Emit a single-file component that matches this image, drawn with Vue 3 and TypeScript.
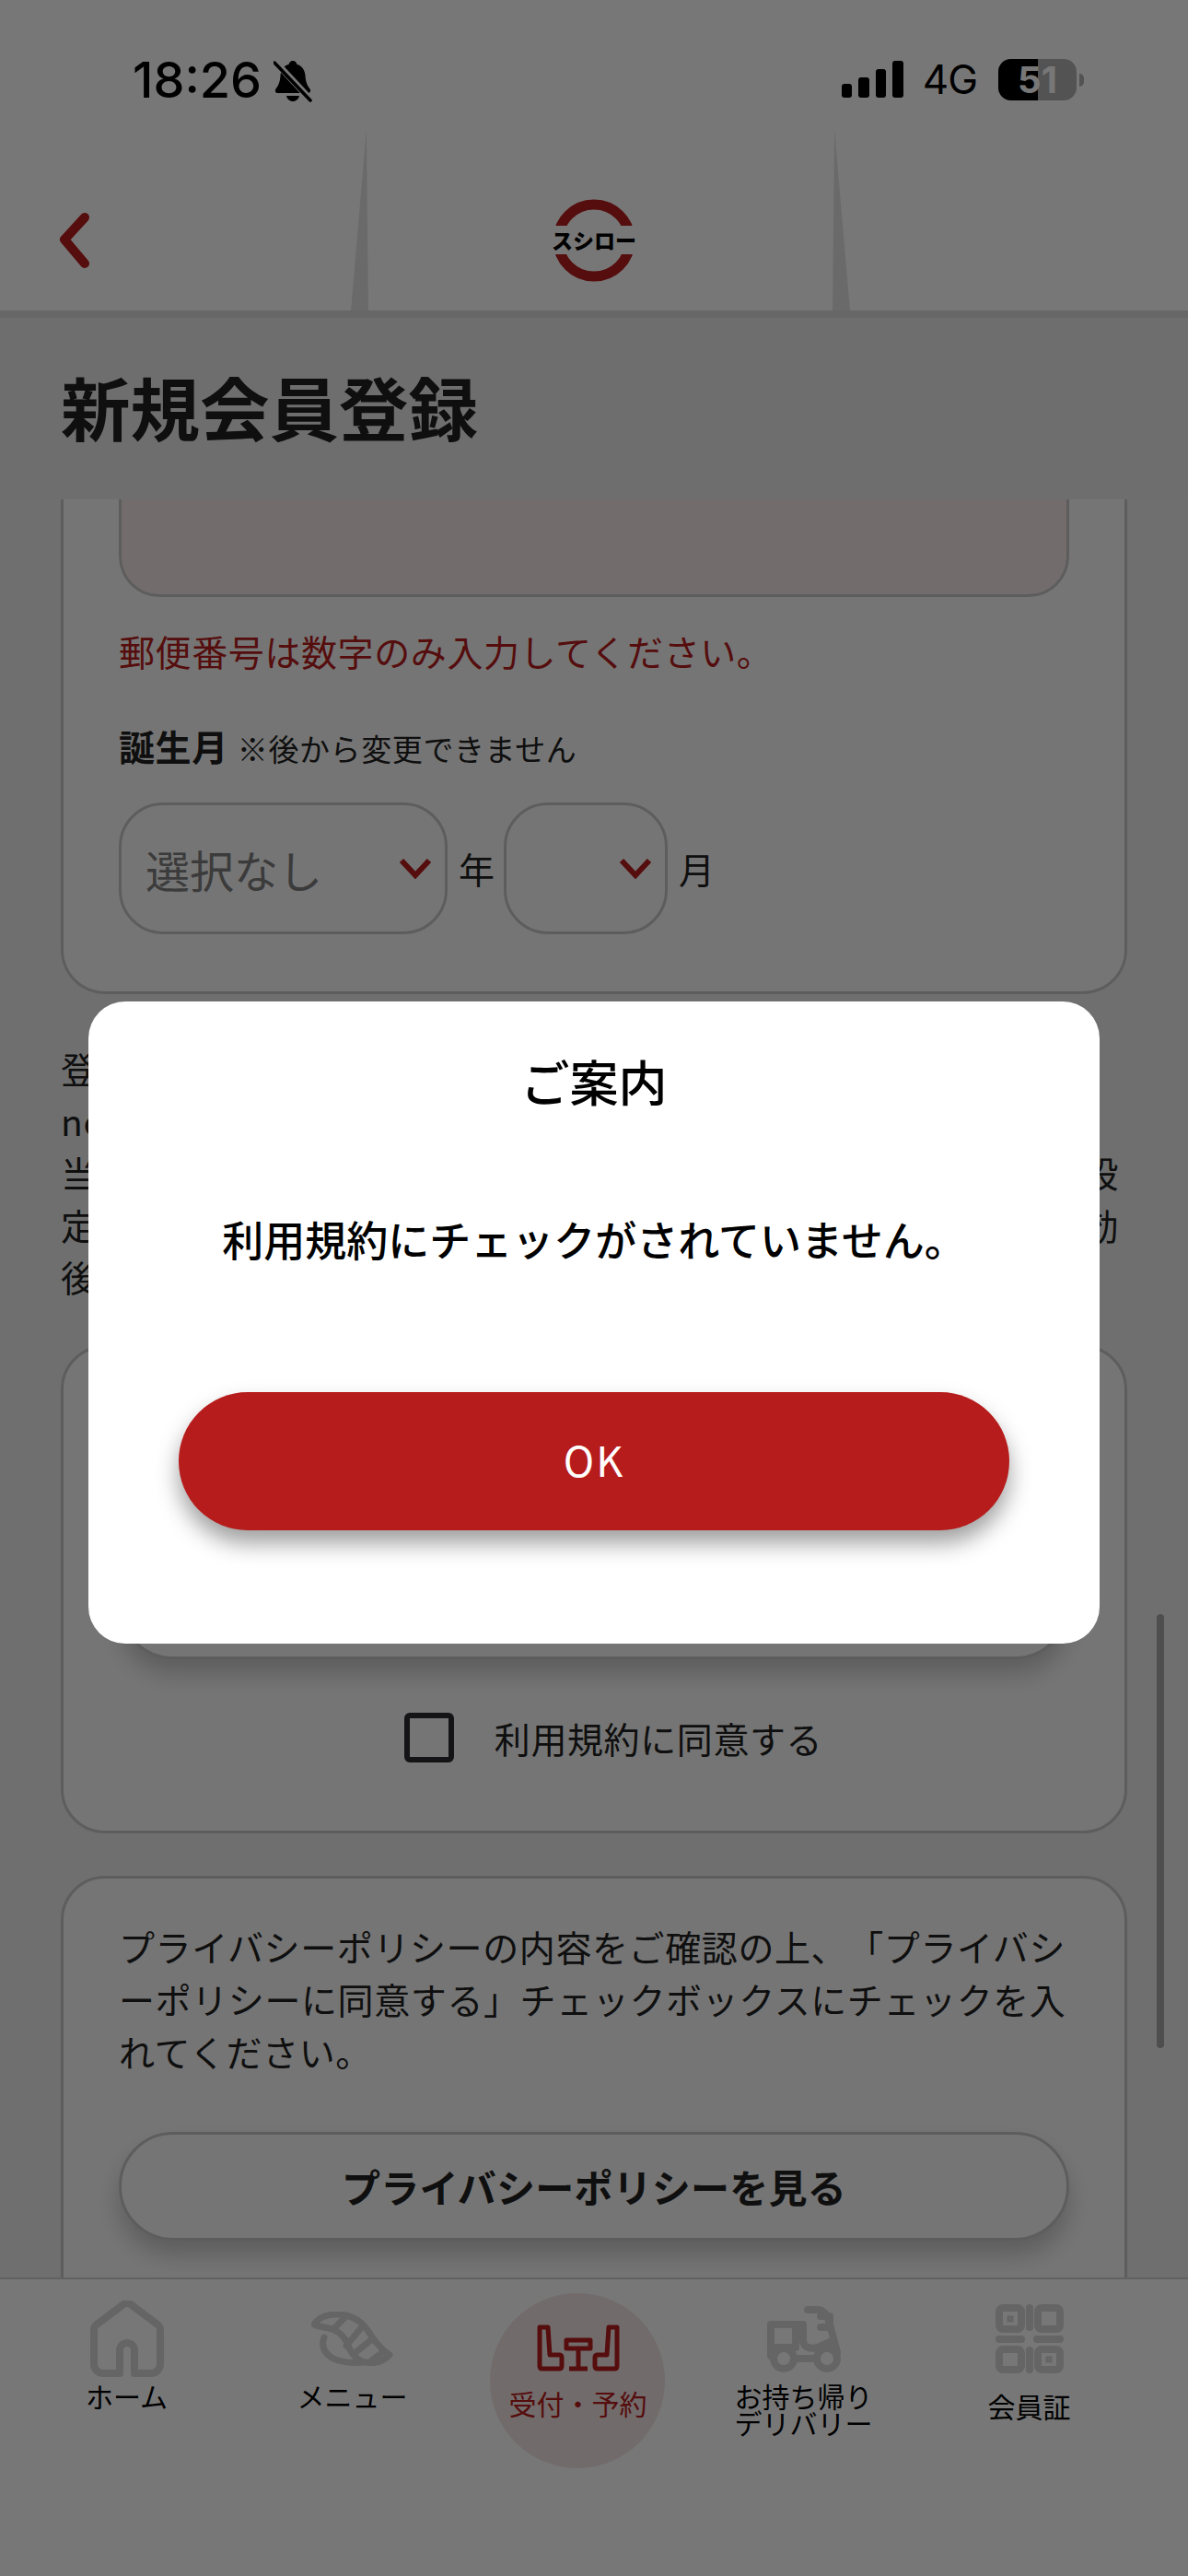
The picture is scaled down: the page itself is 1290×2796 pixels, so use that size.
<script setup lang="ts">
interface Tab {
  key: string
  lines: string[]
  active?: boolean
}

interface NoticeLine {
  text: string
  full?: boolean
}

const tabs: Tab[] = [
  { key: 'home', lines: ['ホーム'] },
  { key: 'menu', lines: ['メニュー'] },
  { key: 'reserve', lines: ['受付・予約'], active: true },
  { key: 'delivery', lines: ['お持ち帰り', 'デリバリー'] },
  { key: 'member', lines: ['会員証'] }
]

const noticeLines: NoticeLine[] = [
  { text: '登録後、確認メールをご登録のアドレスへお送りします。' },
  { text: 'noreply@akindo-sushiro.co.jp からのメールを受信' },
  { text: '当社からのメールが届かない場合は、迷惑メール受信拒否の設', full: true },
  { text: '定をご確認ください。メールのURLから登録手続きが発効', full: true },
  { text: '後、会員サービスをご利用いただけます。' }
]
</script>

<template>
  <div class="screen">
    <header class="top">
      <div class="status">
        <div class="status-left">
          <span class="time">18:26</span>
          <svg class="bell" viewBox="0 0 42 46" width="42" height="46">
            <path d="M21 1c2.500 0 4 1.800 4.300 3.800C31 6.500 34 11 34.500 17c.4 6 1.500 10 5 14.500 1.300 1.800.5 4.500-2 4.500H4.500c-2.500 0-3.300-2.700-2-4.500C6 27 7.100 23 7.500 17 8 11 11 6.500 16.700 4.800 17 2.800 18.500 1 21 1z" fill="#000" />
            <path d="M14 39h14c-.8 3.600-3.600 6-7 6s-6.200-2.400-7-6z" fill="#000" />
            <path d="M0 0L42 45" stroke="#fff" stroke-width="7" />
            <path d="M1 3L40 44" stroke="#000" stroke-width="3.500" stroke-linecap="round" />
          </svg>
        </div>
        <div class="status-right">
          <div class="signal">
            <i class="bar bar-1"></i><i class="bar bar-2"></i><i class="bar bar-3"></i><i class="bar bar-4"></i>
          </div>
          <span class="net">4G</span>
          <div class="battery">
            <div class="battery-body">
              <div class="battery-fill"></div>
              <span class="battery-num">51</span>
            </div>
            <i class="battery-nub"></i>
          </div>
        </div>
      </div>
      <nav class="nav">
        <svg class="back" viewBox="0 0 36 60" width="36" height="60">
          <path d="M29 5L7 29l22 26" fill="none" stroke="#b71c1c" stroke-width="10" stroke-linecap="round" stroke-linejoin="round" />
        </svg>
        <div class="logo">
          <svg viewBox="0 0 92 92" width="92" height="92">
            <circle cx="46" cy="46" r="39" fill="none" stroke="#b71c1c" stroke-width="11" />
            <rect x="0" y="30" width="92" height="31" fill="#fff" />
          </svg>
          <span class="logo-text">スシロー</span>
        </div>
      </nav>
    </header>

    <div class="title-bar">
      <h1 class="title">新規会員登録</h1>
    </div>

    <main class="content">
      <section class="card card-cut">
        <div class="zip-input"></div>
        <p class="error">郵便番号は数字のみ入力してください。</p>
        <div class="birth-label">
          <strong>誕生月</strong>
          <span>※後から変更できません</span>
        </div>
        <div class="birth-row">
          <div class="select select-year">
            <span class="select-value">選択なし</span>
            <svg class="chev" viewBox="0 0 36 24" width="36" height="24"><path d="M3 4l15 16L33 4" fill="none" stroke="#b71c1c" stroke-width="6" /></svg>
          </div>
          <span class="unit">年</span>
          <div class="select select-month">
            <svg class="chev" viewBox="0 0 36 24" width="36" height="24"><path d="M3 4l15 16L33 4" fill="none" stroke="#b71c1c" stroke-width="6" /></svg>
          </div>
          <span class="unit">月</span>
        </div>
      </section>

      <div class="notice">
        <p v-for="line in noticeLines" :key="line.text" :class="{ 'notice-full': line.full }">{{ line.text }}</p>
      </div>

      <section class="card card-terms">
        <p class="card-text">利用規約の内容をご確認の上、「利用規約に同意する」チェックボックスにチェックを入れてください。</p>
        <button class="outline-btn" type="button">利用規約を見る</button>
        <label class="agree">
          <i class="check"></i>
          <span>利用規約に同意する</span>
        </label>
      </section>

      <section class="card card-privacy">
        <p class="card-text">プライバシーポリシーの内容をご確認の上、「プライバシーポリシーに同意する」チェックボックスにチェックを入れてください。</p>
        <button class="outline-btn" type="button">プライバシーポリシーを見る</button>
      </section>
      <i class="scrollbar"></i>
    </main>

    <footer class="tabbar">
      <div v-for="tab in tabs" :key="tab.key" :class="['tab', 'tab-' + tab.key, { 'tab-active': tab.active }]">
        <div class="tab-icon">
          <svg v-if="tab.key === 'home'" viewBox="0 0 80 83" width="80" height="83" fill="none" stroke="#d8d8d8" stroke-width="8" stroke-linejoin="round">
            <path d="M32 79V54a8 8 0 0 1 16 0v25h18a10 10 0 0 0 10-10V32a8 8 0 0 0-3-6L45 5a7 7 0 0 0-10 0L7 26a8 8 0 0 0-3 6v37a10 10 0 0 0 10 10z" />
          </svg>
          <svg v-else-if="tab.key === 'menu'" viewBox="0 0 89 60" width="89" height="60" fill="none" stroke="#d8d8d8" stroke-width="7" stroke-linecap="round" stroke-linejoin="round">
            <path d="M3 14C8 6 18 3 28 3c14 0 25 6 33 17 6 9 12 19 24 27-6 7-16 10-26 8-9-2-15-8-19-18-3-8-8-14-15-17C19 17 9 17 3 14z" />
            <path d="M14 28c-3 8-1 16 8 22 9 5 22 6 34 5" />
            <path d="M25 18l12-12M38 37l16-19M46 46l20-16M63 55l16-12" />
          </svg>
          <svg v-else-if="tab.key === 'reserve'" viewBox="0 0 90 51" width="90" height="51" fill="none" stroke="#b71c1c" stroke-width="5" stroke-linejoin="round">
            <path d="M3 3h9l2 30h10c2 0 3 1 3 3v9c0 2-1 3-3 3H6c-2 0-3-1-3-3z" />
            <path d="M87 3h-9l-2 30H66c-2 0-3 1-3 3v9c0 2 1 3 3 3h18c2 0 3-1 3-3z" />
            <path d="M32 17h26v9H32zM45 26v22M35 48h20" />
          </svg>
          <svg v-else-if="tab.key === 'delivery'" viewBox="0 0 80 72" width="80" height="72" fill="none" stroke="#d8d8d8" stroke-width="8" stroke-linecap="round" stroke-linejoin="round">
            <path d="M44 4h11c7 0 10 6 12 12l9 34" />
            <path d="M58 11h10v12H58" />
            <path d="M4 20h27v25H4z" />
            <path d="M31 20h8v17c0 8 8 10 16 8l13-6" />
            <circle cx="18" cy="57" r="11" />
            <circle cx="65" cy="57" r="11" />
            <path d="M29 57h25M4 45v9" />
          </svg>
          <svg v-else viewBox="0 0 74 75" width="74" height="75" fill="none" stroke="#d8d8d8" stroke-width="8" stroke-linecap="round">
            <rect x="4" y="4" width="24" height="23" rx="4" />
            <rect x="46" y="4" width="24" height="23" rx="4" />
            <rect x="4" y="49" width="24" height="22" rx="4" />
            <rect x="46" y="49" width="24" height="22" rx="4" />
            <path d="M37 4v21M37 50v21M4 38h24M45 38h25" />
            <rect x="14" y="14" width="4" height="4" stroke-width="3" />
            <rect x="56" y="58" width="4" height="4" stroke-width="3" />
          </svg>
        </div>
        <div class="tab-label">
          <span v-for="line in tab.lines" :key="line">{{ line }}</span>
        </div>
      </div>
    </footer>

    <div class="overlay">
      <div class="dialog">
        <h2 class="dialog-title">ご案内</h2>
        <p class="dialog-body">利用規約にチェックがされていません。</p>
        <button class="dialog-btn" type="button">OK</button>
      </div>
    </div>
  </div>
</template>

<style scoped>
.screen {
  position: relative;
  width: 1290px;
  height: 2796px;
  display: flex;
  flex-direction: column;
  overflow: hidden;
  background: #eeeeee;
  color: #222;
  font-family: "Noto Sans CJK JP", "Noto Sans", sans-serif;
  text-spacing-trim: space-all;
}

/* header */
.top {
  position: relative;
  height: 345px;
  flex: none;
  background: #fff;
  border-bottom: 8px solid #dcdcdc;
  box-sizing: border-box;
}
.top::before,
.top::after {
  content: '';
  position: absolute;
  bottom: 0;
  top: 140px;
  width: 19px;
  background: #e4e4e4;
}
.top::before {
  left: 381px;
  clip-path: polygon(89% 0, 100% 100%, 0 100%);
}
.top::after {
  left: 904px;
  clip-path: polygon(11% 0, 100% 100%, 0 100%);
}
.status {
  height: 135px;
  display: flex;
  justify-content: space-between;
  padding: 64px 113px 0 144px;
  box-sizing: border-box;
  color: #000;
  font-family: Inter, "Liberation Sans", sans-serif;
}
.status-left {
  display: flex;
  align-items: flex-start;
  gap: 13px;
}
.time {
  font-size: 54px;
  line-height: 46px;
  font-weight: 500;
}
.bell {
  margin-top: 1px;
}
.status-right {
  display: flex;
  align-items: flex-start;
}
.signal {
  display: flex;
  align-items: flex-end;
  gap: 7px;
  height: 40px;
  margin-top: 2px;
}
.bar {
  display: block;
  width: 11.500px;
  background: #000;
  border-radius: 3px;
}
.bar-1 { height: 15px; }
.bar-2 { height: 22px; }
.bar-3 { height: 31px; }
.bar-4 { height: 40px; }
.net {
  margin-left: 21px;
  font-size: 44px;
  line-height: 45px;
  font-weight: 400;
  letter-spacing: -1px;
}
.battery {
  display: flex;
  align-items: center;
  margin-left: 23px;
}
.battery-body {
  position: relative;
  width: 85px;
  height: 45px;
  border-radius: 14px;
  background: #b2b2b2;
  overflow: hidden;
  text-align: center;
}
.battery-fill {
  position: absolute;
  left: 0;
  top: 0;
  bottom: 0;
  width: 43px;
  background: #000;
}
.battery-num {
  position: relative;
  font-size: 40px;
  line-height: 45px;
  font-weight: 700;
  color: #fff;
}
.battery-nub {
  display: block;
  width: 5px;
  height: 14px;
  margin-left: 3px;
  background: #b2b2b2;
  border-radius: 0 5px 5px 0;
}
.nav {
  position: relative;
  height: 202px;
  display: flex;
  align-items: flex-start;
  justify-content: center;
}
.back {
  position: absolute;
  left: 63px;
  top: 96px;
}
.logo {
  position: relative;
  margin-top: 80px;
  width: 92px;
  height: 92px;
}
.logo svg {
  display: block;
}
.logo-text {
  position: absolute;
  left: -4px;
  right: -4px;
  top: 30px;
  text-align: center;
  font-size: 23px;
  line-height: 30px;
  font-weight: 900;
  color: #000;
  white-space: nowrap;
}

/* page title */
.title-bar {
  height: 197px;
  flex: none;
  display: flex;
  align-items: center;
  padding: 0 66px 8px;
  box-sizing: border-box;
  background: #ececec;
}
.title {
  margin: 0;
  font-size: 75.500px;
  line-height: 100px;
  font-weight: 700;
  color: #202020;
}

/* scrolling form */
.content {
  position: relative;
  flex: 1;
  min-height: 0;
  overflow: hidden;
  padding: 0 66px;
  font-size: 39px;
  letter-spacing: .6px;
}
.card {
  background: #fbfbfb;
  border: 3px solid #c8c8c8;
  border-radius: 48px;
  padding: 47px 60px 0;
}
.card-cut {
  border-top: 0;
  border-radius: 0 0 48px 48px;
  padding: 0 60px 62px;
  margin-bottom: 52px;
}
.card-terms {
  margin-bottom: 46px;
}
.card-privacy {
  padding-top: 45px;
  padding-bottom: 200px;
}
.zip-input {
  height: 106px;
  background: #f7e8e8;
  border: 3px solid #c8c8c8;
  border-top: 0;
  border-radius: 0 0 44px 44px;
  box-sizing: border-box;
}
.error {
  margin: 30px 0 0;
  line-height: 57px;
  color: #b71c1c;
  white-space: nowrap;
}
.birth-label {
  display: flex;
  align-items: baseline;
  gap: 10px;
  margin-top: 46px;
  line-height: 56px;
}
.birth-label strong {
  font-weight: 700;
}
.birth-label span {
  font-size: 33px;
}
.birth-row {
  display: flex;
  align-items: center;
  margin-top: 31px;
}
.select {
  position: relative;
  height: 143px;
  border: 3px solid #c8c8c8;
  border-radius: 48px;
  box-sizing: border-box;
  display: flex;
  align-items: center;
}
.select-year {
  width: 357px;
  padding-left: 26px;
}
.select-month {
  width: 178px;
}
.select-value {
  font-size: 48px;
  letter-spacing: 0;
  color: #7f7f7f;
}
.chev {
  position: absolute;
  right: 14px;
  top: 56px;
}
.unit {
  margin: 0 10px 0 12px;
  line-height: 1;
  letter-spacing: 0;
}
.notice {
  width: 1149px;
  line-height: 56.500px;
  margin-bottom: 46px;
}
.notice p {
  margin: 0;
  white-space: nowrap;
}
.notice .notice-full {
  white-space: normal;
  text-align: justify;
  text-align-last: justify;
}
.card-text {
  margin: 0;
  line-height: 57px;
}
.outline-btn {
  display: block;
  width: 100%;
  height: 118px;
  margin-top: 59px;
  background: #fbfbfb;
  border: 3px solid #c8c8c8;
  border-radius: 59px;
  box-shadow: 0 16px 26px rgba(0, 0, 0, .2);
  font-family: inherit;
  font-size: 42px;
  font-weight: 700;
  letter-spacing: .2px;
  color: #222;
}
.agree {
  display: flex;
  align-items: center;
  justify-content: center;
  gap: 44px;
  height: 54px;
  margin-top: 58px;
  margin-bottom: 74px;
  padding-left: 42px;
}
.check {
  display: block;
  width: 54px;
  height: 54px;
  border: 6px solid #2b2b33;
  border-radius: 6px;
  box-sizing: border-box;
}
.scrollbar {
  position: absolute;
  left: 1256px;
  top: 1210px;
  width: 8px;
  height: 471px;
  border-radius: 4px;
  background: #a8a8a8;
}

/* bottom tabs */
.tabbar {
  height: 324px;
  flex: none;
  display: grid;
  grid-template-columns: repeat(5, 245px);
  padding: 23px 50px 0 15px;
  box-sizing: border-box;
  background: #fff;
  border-top: 2px solid #d0d0d0;
}
.tab {
  position: relative;
  display: flex;
  flex-direction: column;
  align-items: center;
  color: #000;
}
.tab-active::before {
  content: '';
  position: absolute;
  left: 27px;
  top: -8px;
  width: 190px;
  height: 190px;
  border-radius: 50%;
  background: #f4e5e5;
}
.tab-icon {
  position: relative;
  height: 83px;
  box-sizing: border-box;
  display: flex;
  align-items: center;
}
.tab-reserve .tab-icon {
  padding-top: 20px;
}
.tab-label {
  position: relative;
  display: flex;
  flex-direction: column;
  align-items: center;
  margin-top: 6px;
  font-size: 30px;
  line-height: 29px;
  white-space: nowrap;
}
.tab-reserve .tab-label {
  margin-top: 14px;
  color: #b71c1c;
}
.tab-member .tab-label {
  margin-top: 17px;
}

/* dialog */
.overlay {
  position: absolute;
  inset: 0;
  background: rgba(0, 0, 0, .533);
}
.dialog {
  position: absolute;
  left: 96px;
  top: 1087px;
  width: 1098px;
  height: 697px;
  box-sizing: border-box;
  padding-top: 47px;
  background: #fff;
  border-radius: 40px;
  text-align: center;
  color: #000;
}
.dialog-title {
  margin: 0;
  font-size: 53px;
  line-height: 78px;
  font-weight: 500;
}
.dialog-body {
  margin: 103px 0 0;
  font-size: 45px;
  line-height: 60px;
  font-weight: 500;
}
.dialog-btn {
  display: block;
  width: 902px;
  height: 150px;
  margin: 136px auto 0;
  padding-bottom: 6px;
  border: 0;
  border-radius: 75px;
  background: #b71c1c;
  box-shadow: 0 14px 24px rgba(0, 0, 0, .38);
  color: #fff;
  font-family: inherit;
  font-size: 45px;
  letter-spacing: 2px;
}
</style>

<style>
html,
body {
  background: #777;
}
</style>
